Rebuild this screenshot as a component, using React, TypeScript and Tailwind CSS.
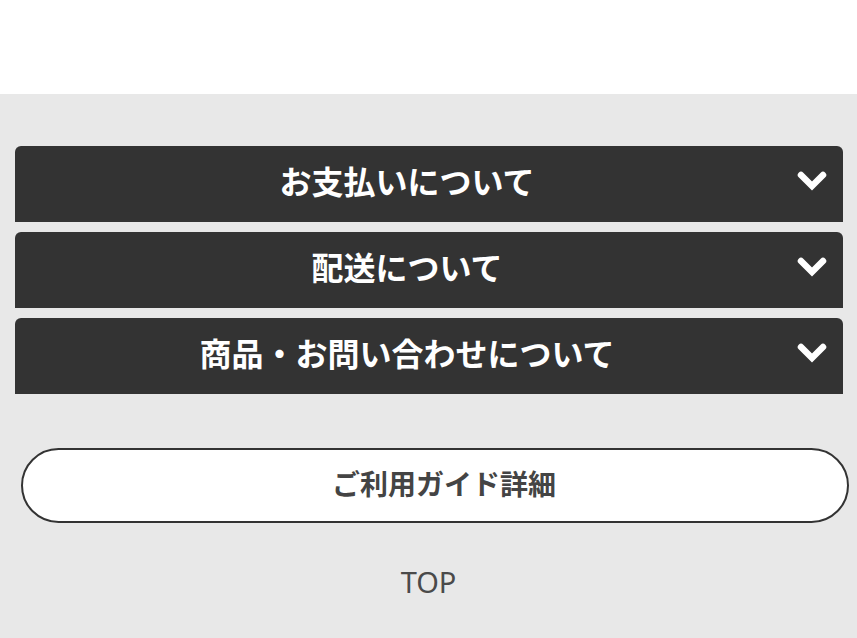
import React from 'react';

const sections = ['お支払いについて', '配送について', '商品・お問い合わせについて'];

const Chevron = () => (
  <svg width="34" height="26" viewBox="0 0 34 26" className="absolute right-[14px] top-[22px]">
    <path d="M6 7 L17 18 L28 7" fill="none" stroke="#fff" strokeWidth="6.5" strokeLinecap="round" strokeLinejoin="miter" />
  </svg>
);

const GuideFooter = () => {
  return (
    <div className="min-h-screen bg-white" style={{ fontFamily: '"Noto Sans", "Noto Sans CJK JP", sans-serif' }}>
      <div className="h-[94px] bg-white" />

      <div className="bg-[#e8e8e8] pt-[52px] pb-[60px]">
        <div className="flex flex-col gap-[10px] pl-[15px] pr-[14px]">
          {sections.map((label) => (
            <button
              key={label}
              className="relative flex h-[76px] items-center justify-center rounded-t-[6px] bg-[#333333] pr-[44px]"
            >
              <span className="mb-[5px] text-[32px] font-bold leading-none text-white">{label}</span>
              <Chevron />
            </button>
          ))}
        </div>

        <div className="ml-[21px] mr-[8px] mt-[54px] flex h-[75px] items-center justify-center rounded-full border-2 border-[#333333] bg-white pl-[18px]">
          <span className="mb-[4px] text-[28px] font-bold leading-none text-[#444444]">ご利用ガイド詳細</span>
        </div>

        <div className="mt-[44px] text-center text-[29px] leading-none text-[#4a4a4a]">TOP</div>
      </div>
    </div>
  );
};

export default GuideFooter;
